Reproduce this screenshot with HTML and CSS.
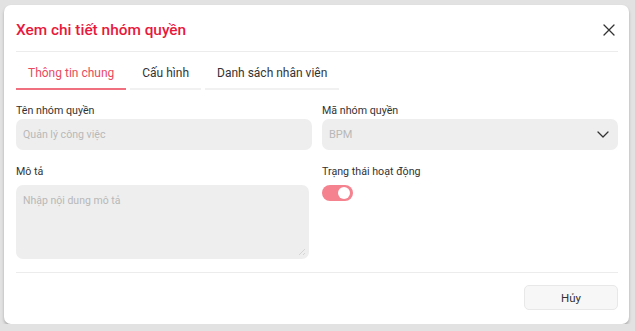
FILE: index.html
```html
<!DOCTYPE html>
<html lang="vi">
<head>
  <meta charset="UTF-8" />
  <meta name="viewport" content="width=device-width, initial-scale=1" />
  <title>Xem chi tiết nhóm quyền</title>
  <link rel="stylesheet" href="styles.css">
</head>
<body>

<div class="modal">
  <div class="modal-header">
    <h2>Xem chi tiết nhóm quyền</h2>
    <button class="close" aria-label="Đóng">
      <svg width="12" height="12" viewBox="0 0 12 12"><path d="M1 1L11 11M11 1L1 11" stroke="#333" stroke-width="1.3" fill="none" stroke-linecap="round"/></svg>
    </button>
  </div>

  <div class="tabs">
    <div class="tab active">Thông tin chung</div>
    <div class="tab">Cấu hình</div>
    <div class="tab">Danh sách nhân viên</div>
  </div>

  <div class="form">
    <div class="field">
      <label>Tên nhóm quyền</label>
      <input class="input" type="text" placeholder="Quản lý công việc" readonly />
    </div>
    <div class="field">
      <label>Mã nhóm quyền</label>
      <div class="input select">
        <span>BPM</span>
        <svg width="12" height="7" viewBox="0 0 12 7"><path d="M1 1L6 6L11 1" stroke="#333" stroke-width="1.3" fill="none" stroke-linecap="round" stroke-linejoin="round"/></svg>
      </div>
    </div>
    <div class="field second">
      <label>Mô tả</label>
      <div class="textarea-wrap">
        <textarea class="textarea" placeholder="Nhập nội dung mô tả" readonly></textarea>
      </div>
    </div>
    <div class="field second">
      <label>Trạng thái hoạt động</label>
      <div class="switch"><span class="knob"></span></div>
    </div>
  </div>

  <div class="modal-footer">
    <button class="btn">Hủy</button>
  </div>
</div>

</body>
</html>
```

FILE: styles.css
```css
body {
  margin: 0;
  font-family: Roboto, "Noto Sans", sans-serif;
  background: #e2e2e2;
  padding: 5px 6px 0 4px;
  color: #333;
}

.modal {
  background: white;
  border-radius: 7px;
  box-shadow: 0 2px 3px rgba(0, 0, 0, 0.25);
  height: 319px;
  padding: 0 11px 0 12px;
  box-sizing: border-box;
}

.modal-header {
  display: flex;
  align-items: center;
  justify-content: space-between;
  height: 46px;
  border-bottom: 1px solid #ececec;
}

.modal-header h2 {
  margin: 0;
  padding-top: 4px;
  font-size: 15.4px;
  font-weight: 500;
  color: #e8193d;
}

.close {
  border: none;
  background: none;
  padding: 0;
  margin: 4px 3px 0 0;
  display: flex;
}

.tabs {
  display: flex;
  gap: 4px;
  margin-top: 6px;
}

.tab {
  font-size: 12px;
  line-height: 15px;
  padding: 8px 12px 7px;
  border-bottom: 2px solid #f1f1f1;
  color: #333;
}

.tab.active {
  color: #ea4a5f;
  border-bottom-color: #f0707f;
}

.form {
  display: grid;
  grid-template-columns: 1fr 1fr;
  column-gap: 10px;
  row-gap: 14px;
  margin-top: 13px;
}

.field label {
  display: block;
  font-size: 10.7px;
  line-height: 16px;
  color: #333;
}

.field.second label {
  margin-bottom: 5px;
}

.input {
  display: block;
  width: 100%;
  box-sizing: border-box;
  height: 31px;
  border: none;
  border-radius: 7px;
  background: #eeeeee;
  padding: 0 7px;
  font-family: inherit;
  font-size: 10.6px;
  color: #b8b8b8;
  outline: none;
}

.input::placeholder,
.textarea::placeholder {
  color: #b8b8b8;
}

.select {
  display: flex;
  align-items: center;
  justify-content: space-between;
  padding-right: 9px;
  font-size: 11px;
}

.textarea-wrap {
  position: relative;
  width: calc(100% - 3px);
}

.textarea-wrap::after {
  content: "";
  position: absolute;
  right: 4px;
  bottom: 4px;
  width: 6px;
  height: 6px;
  background: linear-gradient(135deg, transparent 45%, #d4d4d4 45%, #d4d4d4 55%, transparent 55%, transparent 75%, #d4d4d4 75%, #d4d4d4 85%, transparent 85%);
}

.textarea {
  display: block;
  width: 100%;
  height: 74px;
  box-sizing: border-box;
  border: none;
  border-radius: 7px;
  background: #eeeeee;
  padding: 9px 7px;
  font-family: inherit;
  font-size: 10.5px;
  resize: none;
  outline: none;
}

.switch {
  width: 31px;
  height: 16px;
  border-radius: 8px;
  background: #f4828f;
  position: relative;
  margin-top: 1px;
}

.knob {
  position: absolute;
  top: 2px;
  right: 3px;
  width: 12px;
  height: 12px;
  border-radius: 50%;
  background: white;
}

.modal-footer {
  margin-top: 13px;
  border-top: 1px solid #ececec;
  display: flex;
  justify-content: flex-end;
  padding-top: 12px;
}

.btn {
  width: 94px;
  height: 25px;
  border: 1px solid #e8e8e8;
  border-radius: 5px;
  background: #f7f7f7;
  font-family: inherit;
  font-size: 11.5px;
  color: #333;
}
```
